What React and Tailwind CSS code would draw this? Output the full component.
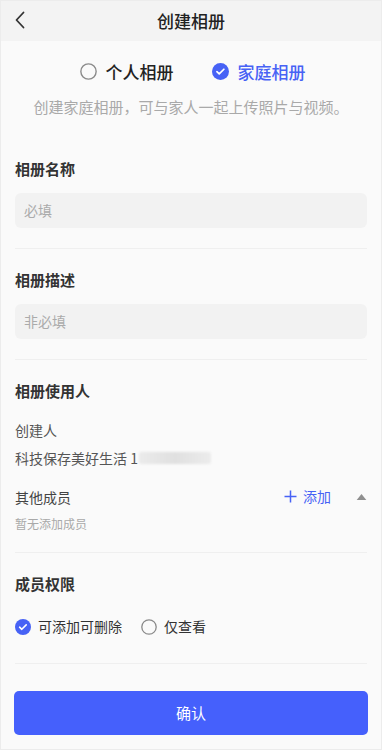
import React, { useState } from 'react'

function Check({ size = 16 }) {
  return (
    <svg width={size} height={size} viewBox="0 0 16 16" className="shrink-0">
      <circle cx="8" cy="8" r="8" fill="#4762f5" />
      <path d="M4.6 8.2l2.2 2.1 4.4-4.4" fill="none" stroke="#fff" strokeWidth="1.6" strokeLinecap="round" strokeLinejoin="round" />
    </svg>
  )
}

function Ring({ size = 16 }) {
  return (
    <svg width={size} height={size} viewBox="0 0 16 16" className="shrink-0">
      <circle cx="8" cy="8" r="7.2" fill="none" stroke="#8a8a8a" strokeWidth="1.3" />
    </svg>
  )
}

function Section({ title, children, last }) {
  return (
    <div className={`pt-[21px] ${last ? 'pb-6' : 'pb-5 border-b border-[#efefef]'}`}>
      <div className="text-[15px] font-bold text-[#333] leading-5">{title}</div>
      {children}
    </div>
  )
}

export default function App() {
  const [type, setType] = useState('family')
  const [perm, setPerm] = useState('edit')

  return (
    <div
      className="w-[382px] h-[750px] bg-[#fafafa] flex flex-col border border-[#ececec]"
      style={{ fontFamily: '"Noto Sans CJK SC", "Noto Sans", sans-serif' }}
    >
      <div className="h-[40px] bg-[#f3f3f3] flex items-center relative shrink-0">
        <svg width="12" height="18" viewBox="0 0 12 18" className="absolute left-[13px] top-[10px]">
          <path d="M9.5 1.5L2.5 9l7 7.5" fill="none" stroke="#333" strokeWidth="1.8" strokeLinecap="round" strokeLinejoin="round" />
        </svg>
        <div className="flex-1 text-center text-[17px] font-medium text-[#222]">创建相册</div>
      </div>

      <div className="flex justify-center items-center gap-[38px] mt-[18px] ml-[3px] text-[17px] font-medium">
        <button className="flex items-center gap-[9px]" onClick={() => setType('personal')}>
          {type === 'personal' ? <Check size={17} /> : <Ring size={17} />}
          <span className={type === 'personal' ? 'text-[#4762f5]' : 'text-[#222]'}>个人相册</span>
        </button>
        <button className="flex items-center gap-[9px]" onClick={() => setType('family')}>
          {type === 'family' ? <Check size={17} /> : <Ring size={17} />}
          <span className={type === 'family' ? 'text-[#4762f5]' : 'text-[#222]'}>家庭相册</span>
        </button>
      </div>
      <div className="text-center text-[15px] text-[#a9a9a9] mt-[11px]">创建家庭相册，可与家人一起上传照片与视频。</div>

      <div className="px-[14px] mt-[20px]">
        <Section title="相册名称">
          <div className="mt-[14px] h-[35px] rounded-[6px] bg-[#f2f2f2] flex items-center px-[9px] text-[14px] text-[#ababab]">必填</div>
        </Section>
        <Section title="相册描述">
          <div className="mt-[14px] h-[35px] rounded-[6px] bg-[#f2f2f2] flex items-center px-[9px] text-[14px] text-[#ababab]">非必填</div>
        </Section>
        <Section title="相册使用人">
          <div className="mt-[19px] text-[14px] text-[#555] leading-5">创建人</div>
          <div className="mt-[8px] text-[14px] text-[#555] leading-5 flex items-center">
            科技保存美好生活 1
            <span className="inline-block ml-[1px] w-[72px] h-[12px] rounded-[2px] bg-gradient-to-r from-[#ebebeb] via-[#e0e0e0] to-[#ececec] blur-[1px]" />
          </div>
          <div className="mt-[18px] flex items-center">
            <div className="flex-1 text-[14px] text-[#444] leading-5">其他成员</div>
            <div className="flex items-center gap-[6px] text-[14px] text-[#4762f5]">
              <svg width="13" height="13" viewBox="0 0 13 13">
                <path d="M6.5 0.5v12M0.5 6.5h12" stroke="#4762f5" strokeWidth="1.5" />
              </svg>
              添加
            </div>
            <svg width="11" height="8" viewBox="0 0 11 8" className="ml-[25px]">
              <path d="M5.5 1l4.8 6H0.7z" fill="#8f8f8f" />
            </svg>
          </div>
          <div className="mt-[9px] text-[12px] text-[#a9a9a9] leading-4">暂无添加成员</div>
        </Section>
        <Section title="成员权限">
          <div className="mt-[22px] pb-[6px] flex items-center gap-[10px] text-[14px] text-[#333]">
            <button className="flex items-center gap-[7px]" onClick={() => setPerm('edit')}>
              {perm === 'edit' ? <Check /> : <Ring />}
              <span>可添加可删除</span>
            </button>
            <button className="flex items-center gap-[7px] ml-[9px]" onClick={() => setPerm('view')}>
              {perm === 'view' ? <Check /> : <Ring />}
              <span>仅查看</span>
            </button>
          </div>
        </Section>
      </div>

      <div className="px-[13px] mt-auto mb-[14px]">
        <button className="w-full h-[44px] rounded-[5px] bg-[#4560fc] text-white text-[15px]">确认</button>
      </div>
    </div>
  )
}
